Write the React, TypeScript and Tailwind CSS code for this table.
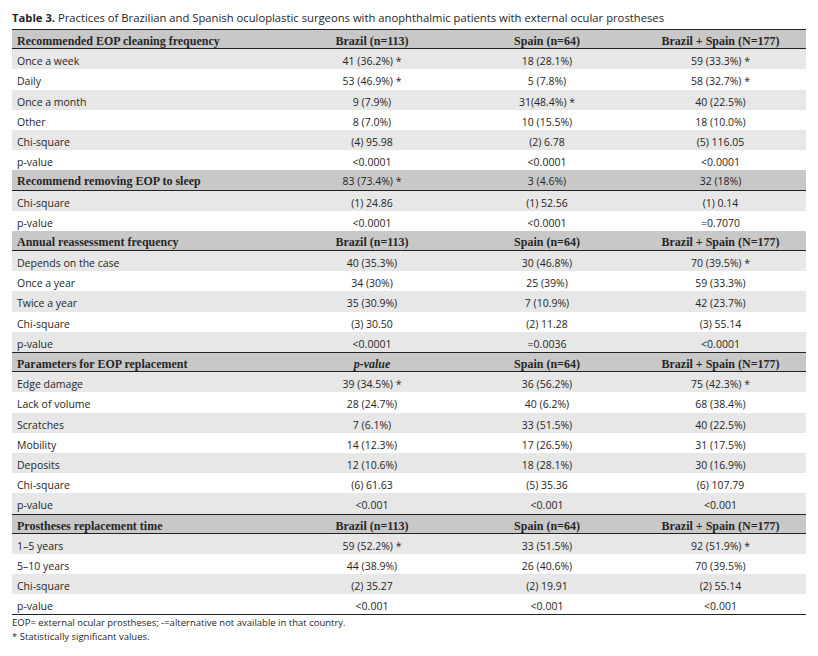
import React from 'react'

type Row = { label: string; values: [string, string, string] }
type Section = { title: string; head: [string, string, string]; plainHead?: boolean; italicFirst?: boolean; lineAbove?: boolean; rows: Row[] }

const HEAD: [string, string, string] = ['Brazil (n=113)', 'Spain (n=64)', 'Brazil + Spain (N=177)']

const sections: Section[] = [
  {
    title: 'Recommended EOP cleaning frequency',
    head: HEAD,
    lineAbove: true,
    rows: [
      { label: 'Once a week', values: ['41 (36.2%) *', '18 (28.1%)', '59 (33.3%) *'] },
      { label: 'Daily', values: ['53 (46.9%) *', '5 (7.8%)', '58 (32.7%) *'] },
      { label: 'Once a month', values: ['9 (7.9%)', '31(48.4%) *', '40 (22.5%)'] },
      { label: 'Other', values: ['8 (7.0%)', '10 (15.5%)', '18 (10.0%)'] },
      { label: 'Chi-square', values: ['(4) 95.98', '(2) 6.78', '(5) 116.05'] },
      { label: 'p-value', values: ['<0.0001', '<0.0001', '<0.0001'] },
    ],
  },
  {
    title: 'Recommend removing EOP to sleep',
    head: ['83 (73.4%) *', '3 (4.6%)', '32 (18%)'],
    plainHead: true,
    rows: [
      { label: 'Chi-square', values: ['(1) 24.86', '(1) 52.56', '(1) 0.14'] },
      { label: 'p-value', values: ['<0.0001', '<0.0001', '=0.7070'] },
    ],
  },
  {
    title: 'Annual reassessment frequency',
    head: HEAD,
    rows: [
      { label: 'Depends on the case', values: ['40 (35.3%)', '30 (46.8%)', '70 (39.5%) *'] },
      { label: 'Once a year', values: ['34 (30%)', '25 (39%)', '59 (33.3%)'] },
      { label: 'Twice a year', values: ['35 (30.9%)', '7 (10.9%)', '42 (23.7%)'] },
      { label: 'Chi-square', values: ['(3) 30.50', '(2) 11.28', '(3) 55.14'] },
      { label: 'p-value', values: ['<0.0001', '=0.0036', '<0.0001'] },
    ],
  },
  {
    title: 'Parameters for EOP replacement',
    head: ['p-value', 'Spain (n=64)', 'Brazil + Spain (N=177)'],
    italicFirst: true,
    lineAbove: true,
    rows: [
      { label: 'Edge damage', values: ['39 (34.5%) *', '36 (56.2%)', '75 (42.3%) *'] },
      { label: 'Lack of volume', values: ['28 (24.7%)', '40 (6.2%)', '68 (38.4%)'] },
      { label: 'Scratches', values: ['7 (6.1%)', '33 (51.5%)', '40 (22.5%)'] },
      { label: 'Mobility', values: ['14 (12.3%)', '17 (26.5%)', '31 (17.5%)'] },
      { label: 'Deposits', values: ['12 (10.6%)', '18 (28.1%)', '30 (16.9%)'] },
      { label: 'Chi-square', values: ['(6) 61.63', '(5) 35.36', '(6) 107.79'] },
      { label: 'p-value', values: ['<0.001', '<0.001', '<0.001'] },
    ],
  },
  {
    title: 'Prostheses replacement time',
    head: HEAD,
    lineAbove: true,
    rows: [
      { label: '1–5 years', values: ['59 (52.2%) *', '33 (51.5%)', '92 (51.9%) *'] },
      { label: '5–10 years', values: ['44 (38.9%)', '26 (40.6%)', '70 (39.5%)'] },
      { label: 'Chi-square', values: ['(2) 35.27', '(2) 19.91', '(2) 55.14'] },
      { label: 'p-value', values: ['<0.001', '<0.001', '<0.001'] },
    ],
  },
]

const grid = 'grid grid-cols-[273px_174px_176px_171px] items-start h-[20.2px] leading-[14px]'

const App = () => {
  return (
    <div className="w-[818px] h-[656px] bg-white text-[#262626] font-['Open_Sans',sans-serif] pt-[10px]">
      <div className="pl-[12px] text-[11.25px] leading-[16px] h-[19px]">
        <span className="font-bold">Table 3.</span> Practices of Brazilian and Spanish oculoplastic surgeons with anophthalmic patients with external ocular prostheses
      </div>
      <div className="ml-[12px] w-[794px] border-b-[1.5px] border-[#222]">
        {sections.map((section, sIndex) => (
          <div key={sIndex}>
            <div
              className={`${grid} pt-[4px] bg-[#c8c8c8] border-b-[1.5px] border-[#222] font-['Liberation_Serif',serif] font-bold text-[12px] ${section.lineAbove ? 'border-t-[1.5px]' : ''}`}
            >
              <div className="pl-[5px]">{section.title}</div>
              {section.head.map((h, i) => (
                <div
                  key={i}
                  className={`text-center ${i === 0 && section.italicFirst ? 'italic' : ''} ${section.plainHead ? "font-['Open_Sans',sans-serif] font-normal text-[10.5px]" : ''}`}
                >
                  {h}
                </div>
              ))}
            </div>
            {section.rows.map((row, rIndex) => (
              <div key={rIndex} className={`${grid} pt-[5px] text-[10.5px] ${rIndex % 2 === 0 ? 'bg-[#e7e7e7]' : 'bg-white'}`}>
                <div className="pl-[5px]">{row.label}</div>
                {row.values.map((v, i) => (
                  <div key={i} className="text-center">{v}</div>
                ))}
              </div>
            ))}
          </div>
        ))}
      </div>
      <div className="pl-[12px] pt-[1px] text-[9.5px] leading-[13.5px]">
        <div>EOP= external ocular prostheses; -=alternative not available in that country.</div>
        <div>* Statistically significant values.</div>
      </div>
    </div>
  )
}

export default App
